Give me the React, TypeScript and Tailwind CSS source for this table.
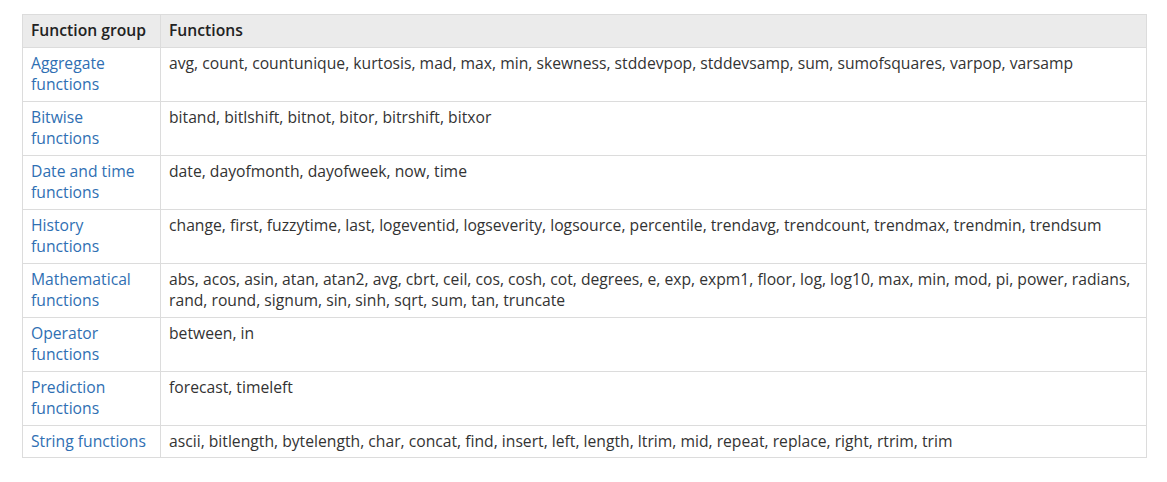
import React from 'react';

const rows: { group: string; fns: string }[] = [
  { group: 'Aggregate functions', fns: 'avg, count, countunique, kurtosis, mad, max, min, skewness, stddevpop, stddevsamp, sum, sumofsquares, varpop, varsamp' },
  { group: 'Bitwise functions', fns: 'bitand, bitlshift, bitnot, bitor, bitrshift, bitxor' },
  { group: 'Date and time functions', fns: 'date, dayofmonth, dayofweek, now, time' },
  { group: 'History functions', fns: 'change, first, fuzzytime, last, logeventid, logseverity, logsource, percentile, trendavg, trendcount, trendmax, trendmin, trendsum' },
  { group: 'Mathematical functions', fns: 'abs, acos, asin, atan, atan2, avg, cbrt, ceil, cos, cosh, cot, degrees, e, exp, expm1, floor, log, log10, max, min, mod, pi, power, radians, rand, round, signum, sin, sinh, sqrt, sum, tan, truncate' },
  { group: 'Operator functions', fns: 'between, in' },
  { group: 'Prediction functions', fns: 'forecast, timeleft' },
  { group: 'String functions', fns: 'ascii, bitlength, bytelength, char, concat, find, insert, left, length, ltrim, mid, repeat, replace, right, rtrim, trim' },
];

export default function App() {
  return (
    <div className="w-[1167px] h-[482px] bg-white pl-[22px] pt-[14px] font-['Open_Sans',sans-serif] text-[15.7px] leading-[21.5px] text-[#333]">
      <table className="w-[1125px] border-collapse border border-[#dcdcdc] table-fixed">
        <colgroup>
          <col className="w-[138px]" />
          <col />
        </colgroup>
        <thead>
          <tr className="bg-[#ebebeb]">
            <th className="border border-[#dcdcdc] px-2 py-[5px] text-left font-semibold text-[#222]">Function group</th>
            <th className="border border-[#dcdcdc] px-2 py-[5px] text-left font-semibold text-[#222]">Functions</th>
          </tr>
        </thead>
        <tbody>
          {rows.map((r) => (
            <tr key={r.group}>
              <td className="border border-[#dcdcdc] px-2 py-[5px] align-top text-[#2f6fb3]">{r.group}</td>
              <td className="border border-[#dcdcdc] px-2 py-[5px] align-top">{r.fns}</td>
            </tr>
          ))}
        </tbody>
      </table>
    </div>
  );
}
